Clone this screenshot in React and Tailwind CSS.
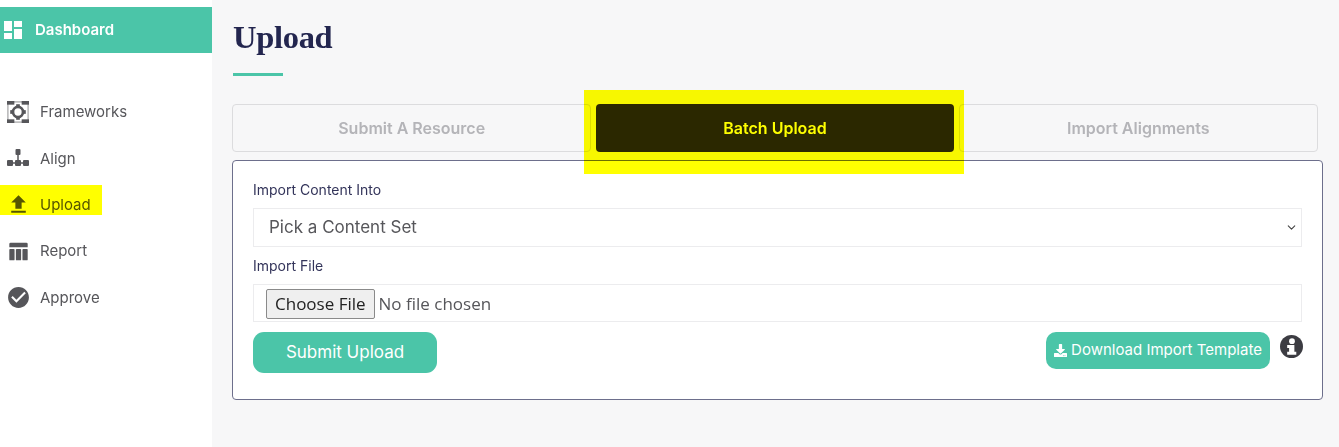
import React from "react";
import { ChevronDown } from "lucide-react";
import { FaDownload } from "react-icons/fa";
import { MdCheckCircle, MdDashboard, MdFileUpload } from "react-icons/md";

const FrameworksIcon = ({ className }) => (
  <svg viewBox="0 0 24 24" className={className} fill="currentColor">
    <rect x="1" y="1" width="22" height="22" fill="none" stroke="currentColor" strokeWidth="1.2" opacity="0.6" />
    <rect x="0" y="0" width="8" height="4" />
    <rect x="16" y="0" width="8" height="4" />
    <rect x="0" y="20" width="8" height="4" />
    <rect x="16" y="20" width="8" height="4" />
    <circle cx="12" cy="12" r="5.500" fill="none" stroke="currentColor" strokeWidth="3" />
    <rect x="10" y="3.500" width="4" height="3" />
    <rect x="10" y="17.500" width="4" height="3" />
    <rect x="3.500" y="10" width="3" height="4" />
    <rect x="17.500" y="10" width="3" height="4" />
  </svg>
);

const AlignIcon = ({ className }) => (
  <svg viewBox="0 0 24 24" className={className} fill="currentColor">
    <rect x="9.500" y="3" width="5" height="6" rx="1" />
    <rect x="11.250" y="9" width="1.500" height="5" />
    <rect x="1" y="16.250" width="22" height="1.500" />
    <rect x="1" y="14" width="6" height="6" rx="1" />
    <rect x="9" y="14" width="6" height="6" rx="1" />
    <rect x="17" y="14" width="6" height="6" rx="1" />
  </svg>
);

const ReportIcon = ({ className }) => (
  <svg viewBox="0 0 24 24" className={className} fill="currentColor">
    <path d="M3 2h18a1.500 1.500 0 0 1 1.500 1.500V7h-21V3.500A1.500 1.500 0 0 1 3 2z" />
    <rect x="1.500" y="9" width="6" height="13" rx="1" />
    <rect x="9" y="9" width="6" height="13" rx="1" />
    <rect x="16.500" y="9" width="6" height="13" rx="1" />
  </svg>
);

const InfoIcon = ({ className }) => (
  <svg viewBox="0 0 24 24" className={className}>
    <circle cx="12" cy="12" r="12" fill="currentColor" />
    <circle cx="12.500" cy="6.500" r="3" fill="white" />
    <path d="M7.500 10.500h7.500v7h2v3H7.500v-3h2v-4h-2z" fill="white" />
  </svg>
);

const navItems = [
  { label: "Frameworks", Icon: FrameworksIcon, size: "w-[22px] h-[22px]" },
  { label: "Align", Icon: AlignIcon, size: "w-[24px] h-[24px]" },
  { label: "Upload", Icon: MdFileUpload, size: "w-[25px] h-[25px]", marked: true },
  { label: "Report", Icon: ReportIcon, size: "w-[21px] h-[21px]" },
  { label: "Approve", Icon: MdCheckCircle, size: "w-[25px] h-[25px]" },
];

const Sidebar = () => (
  <aside className="w-[212px] shrink-0 bg-white pt-[7px] min-h-[447px]">
    <div className="h-[46px] bg-[#4bc5a8] flex items-center text-white font-semibold text-[15px]">
      <MdDashboard className="w-[24px] h-[24px] ml-px" />
      <span className="ml-[10px] pt-px">Dashboard</span>
    </div>
    <nav className="mt-[36px] flex flex-col">
      {navItems.map(({ label, Icon, size, marked }) => (
        <div key={label} className="relative h-[46.300px] flex items-center text-[#56565a] text-[15px]">
          <span className="w-[40px] flex justify-center pr-[4px]">
            <Icon className={size} />
          </span>
          <span className="pt-px">{label}</span>
          {marked && (
            <div className="absolute left-0 top-[3px] w-[102px] h-[30px] bg-[#ffff00] mix-blend-multiply" />
          )}
        </div>
      ))}
    </nav>
  </aside>
);

const Tab = ({ label, active }) => (
  <div
    className={
      active
        ? "flex-1 h-[48px] rounded-[4px] bg-[#2b2855] text-white font-semibold text-base flex items-center justify-center"
        : "flex-1 h-[48px] rounded-[4px] border border-[#dcdcde] text-[#b4b4b8] font-semibold text-base flex items-center justify-center"
    }
  >
    {label}
  </div>
);

export default function App() {
  return (
    <div className="flex h-[447px] overflow-hidden bg-[#f7f7f8] font-['Inter','Liberation_Sans',sans-serif]">
      <Sidebar />
      <main className="flex-1 pl-[20px] pr-4 relative">
        <h1 className="mt-[16px] ml-px h-[42px] text-[32.500px] leading-[42px] font-bold text-[#23264f] font-['Liberation_Serif',serif] tracking-[-0.3px]">
          Upload
        </h1>
        <div className="mt-[15px] ml-px w-[50px] h-[3px] bg-[#4bc5a8]" />
        <div className="mt-[28px] w-[1086px] flex gap-[5px]">
          <Tab label="Submit A Resource" />
          <Tab label="Batch Upload" active />
          <Tab label="Import Alignments" />
        </div>
        <section className="mt-2 h-[240px] rounded-[4px] border border-[#6d6f8c] bg-white px-5 pt-[19px]">
          <label className="block text-sm leading-5 text-[#33345a]">Import Content Into</label>
          <div className="relative mt-2">
            <select className="w-full h-[39px] appearance-none border border-[#ececee] bg-white pl-[15px] text-[17px] text-[#56565a]">
              <option>Pick a Content Set</option>
            </select>
            <ChevronDown className="absolute right-[4px] top-[13px] w-[13px] h-[13px] text-[#444]" />
          </div>
          <label className="block mt-[9px] text-sm leading-5 text-[#33345a]">Import File</label>
          <div className="mt-2 h-[38px] border border-[#ececee] pl-3 pt-[2px] flex items-center">
            <input
              type="file"
              className="text-[17px] text-[#56565a] font-['Open_Sans',sans-serif] file:mr-1 file:px-[8px] file:h-[30px] file:border file:border-[#8a8a8a] file:rounded-[2px] file:bg-[#efefef] file:text-[#222]"
            />
          </div>
          <div className="mt-[10px] flex justify-between items-start">
            <button className="w-[184px] h-[41px] rounded-[11px] bg-[#4bc5a8] text-white text-[17px]">
              Submit Upload
            </button>
            <div className="flex items-start">
              <button className="w-[224px] h-[37px] rounded-[10px] bg-[#4bc5a8] text-white text-[15px] flex items-center justify-center gap-1">
                <FaDownload className="w-[13px] h-[13px]" />
                Download Import Template
              </button>
              <InfoIcon className="ml-[10px] mr-[-1px] mt-[3px] w-[23px] h-[23px] text-[#3c3c42]" />
            </div>
          </div>
        </section>
        <div className="absolute left-[372px] top-[90px] w-[380px] h-[84px] bg-[#ffff00] mix-blend-multiply" />
      </main>
    </div>
  );
}
